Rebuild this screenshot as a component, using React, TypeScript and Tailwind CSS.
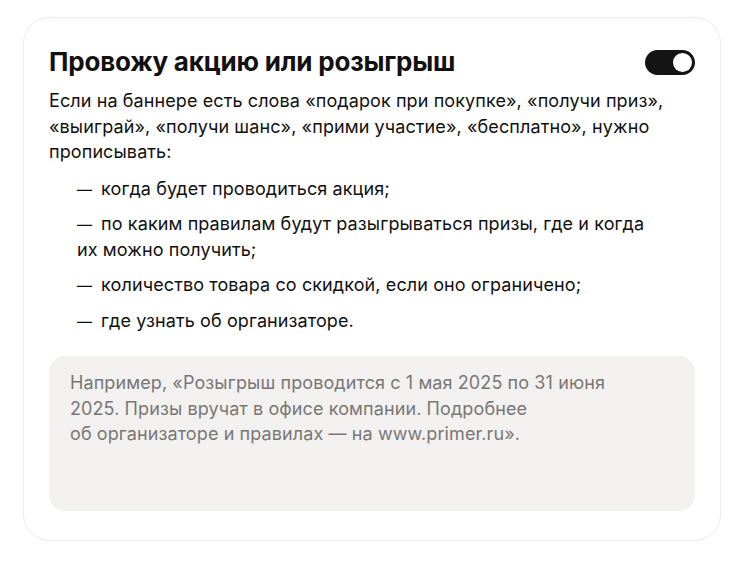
import { useState } from "react";

const items = [
  "когда будет проводиться акция;",
  "по каким правилам будут разыгрываться призы, где и когда их\u00a0можно получить;",
  "количество товара со скидкой, если оно ограничено;",
  "где узнать об организаторе.",
];

export default function App() {
  const [on, setOn] = useState(true);

  return (
    <div className="min-h-screen bg-white pt-[17px] pl-[23px]" style={{ fontFamily: "Inter, 'Noto Sans', sans-serif" }}>
      <div className="w-[698px] h-[524px] rounded-[26px] border border-[#ececec] bg-white px-[25px] pt-[28px]">
        <div className="flex items-center justify-between">
          <h2 className="text-[26px] leading-[32px] font-bold tracking-[-0.2px] text-[#111]">
            Провожу акцию или розыгрыш
          </h2>
          <button
            onClick={() => setOn(!on)}
            className="relative w-[50px] h-[25px] rounded-full bg-[#141414]"
          >
            <span
              className={
                on
                  ? "absolute right-[3px] top-[3px] w-[19px] h-[19px] rounded-full bg-white"
                  : "absolute left-[3px] top-[3px] w-[19px] h-[19px] rounded-full bg-white"
              }
            />
          </button>
        </div>

        <p className="mt-[10px] text-[18px] leading-[25.5px] tracking-[0.1px] text-[#111]">
          Если на баннере есть слова «подарок при покупке», «получи приз», «выиграй», «получи шанс», «прими участие», «бесплатно», нужно прописывать:
        </p>

        <ul className="mt-[11px] flex flex-col gap-[10px] pl-[28px] pr-[30px] text-[18px] leading-[25.5px] tracking-[0.1px] text-[#111]">
          {items.map((t) => (
            <li key={t}>
              <span className="mr-[9px] text-[15px] leading-none">—</span>
              {t}
            </li>
          ))}
        </ul>

        <div className="mt-[23px] h-[155px] rounded-[16px] bg-[#f2f1ef] pl-[21px] pt-[14px] pr-[80px]">
          <p className="text-[18px] leading-[25.5px] tracking-[0.1px] text-[#787775]">
            Например, «Розыгрыш проводится с 1 мая 2025 по 31 июня 2025. Призы вручат в офисе компании. Подробнее об{"\u00a0"}организаторе и правилах — на www.primer.ru».
          </p>
        </div>
      </div>
    </div>
  );
}
